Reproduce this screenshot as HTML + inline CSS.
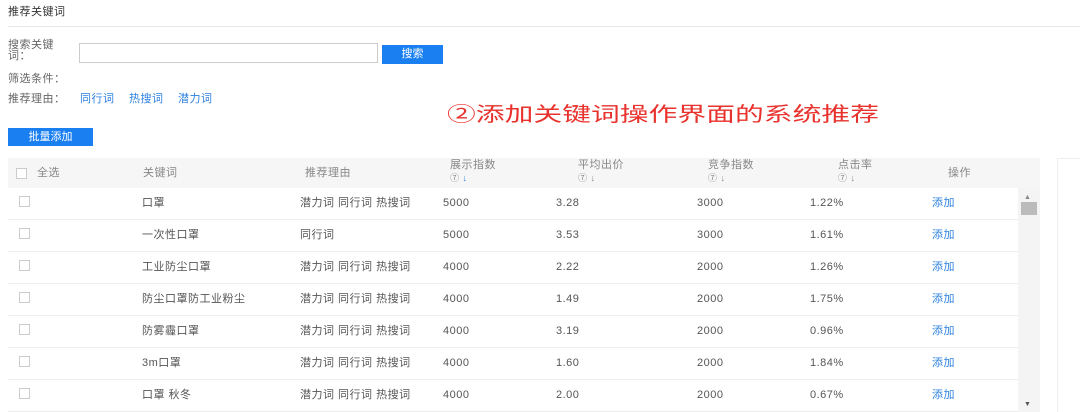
<!DOCTYPE html>
<html><head><meta charset="utf-8"><style>
*{margin:0;padding:0;box-sizing:border-box}
body{width:1080px;height:412px;background:#fff;font-family:"Liberation Sans","Noto Sans CJK SC",sans-serif;font-size:11px;line-height:14px;color:#555;position:relative;overflow:hidden}
.a{position:absolute;white-space:nowrap;line-height:14px;letter-spacing:0.5px}
.blue{color:#2a7fe0}
.btn{position:absolute;background:#1a7ff0;color:#fff;text-align:center}
.cb{position:absolute;width:11px;height:11px;border:1px solid #ccc;background:#fff}
.row{position:absolute;left:8px;width:1010px;height:32px;border-bottom:1px solid #eee}
</style></head><body>
<div class="a" style="left:8px;top:5px;color:#333">推荐关键词</div>
<div class="a" style="left:8px;top:26px;width:1072px;height:1px;background:#e6e6e6"></div>
<div class="a" style="left:8px;top:40px;line-height:11px;color:#666">搜索关键<br>词：</div>
<div class="a" style="left:79px;top:43px;width:299px;height:20px;border:1px solid #ccc"></div>
<div class="btn" style="left:382px;top:45px;width:61px;height:19px;line-height:19px">搜索</div>
<div class="a" style="left:8px;top:72px;color:#666">筛选条件：</div>
<div class="a" style="left:8px;top:92px;color:#666">推荐理由：</div>
<div class="a blue" style="left:80px;top:92px">同行词</div>
<div class="a blue" style="left:129px;top:92px">热搜词</div>
<div class="a blue" style="left:178px;top:92px">潜力词</div>
<div class="a" style="left:447px;top:102px;color:#e8322d;font-size:20px;line-height:26px;letter-spacing:0;transform:scaleX(1.44);transform-origin:0 0">②添加关键词操作界面的系统推荐</div>
<div class="btn" style="left:8px;top:128px;width:85px;height:18px;line-height:18px">批量添加</div>
<div class="a" style="left:8px;top:158px;width:1032px;height:30px;background:#f6f6f6"></div>
<div class="a" style="left:1057px;top:158px;width:23px;height:254px;border-left:1px solid #eee;border-top:1px solid #eee"></div>
<div class="cb" style="left:16px;top:168px"></div>
<div class="a" style="left:37px;top:166px;color:#888">全选</div>
<div class="a" style="left:143px;top:166px;color:#888">关键词</div>
<div class="a" style="left:305px;top:166px;color:#888">推荐理由</div>
<div class="a" style="left:450px;top:159px;color:#888;line-height:13px">展示指数<br><span style="font-size:9px">⑦ <span class="blue">↓</span></span></div>
<div class="a" style="left:578px;top:159px;color:#888;line-height:13px">平均出价<br><span style="font-size:9px">⑦ ↓</span></div>
<div class="a" style="left:708px;top:159px;color:#888;line-height:13px">竞争指数<br><span style="font-size:9px">⑦ ↓</span></div>
<div class="a" style="left:838px;top:159px;color:#888;line-height:13px">点击率<br><span style="font-size:9px">⑦ ↓</span></div>
<div class="a" style="left:948px;top:166px;color:#888">操作</div>
<div class="a" style="left:1018px;top:188px;width:22px;height:224px;background:#f4f4f4"></div>
<div class="a" style="left:1024px;top:191px;font-size:7px;color:#888">▲</div>
<div class="a" style="left:1021px;top:202px;width:16px;height:13px;background:#bbb"></div>
<div class="a" style="left:1024px;top:398px;font-size:7px;color:#555">▼</div>
<div id="rows"></div>
<script>
var d=[["口罩","潜力词 同行词 热搜词","5000","3.28","3000","1.22%"],["一次性口罩","同行词","5000","3.53","3000","1.61%"],["工业防尘口罩","潜力词 同行词 热搜词","4000","2.22","2000","1.26%"],["防尘口罩防工业粉尘","潜力词 同行词 热搜词","4000","1.49","2000","1.75%"],["防雾霾口罩","潜力词 同行词 热搜词","4000","3.19","2000","0.96%"],["3m口罩","潜力词 同行词 热搜词","4000","1.60","2000","1.84%"],["口罩 秋冬","潜力词 同行词 热搜词","4000","2.00","2000","0.67%"]];
var h="";d.forEach(function(r,i){var t=188+i*32;var y=t+8;
h+='<div class="row" style="top:'+t+'px"></div><div class="cb" style="left:19px;top:'+(t+8)+'px"></div>'+
'<div class="a" style="left:142px;top:'+y+'px">'+r[0]+'</div><div class="a" style="left:300px;top:'+y+'px">'+r[1]+'</div>'+
'<div class="a" style="left:443px;top:'+y+'px">'+r[2]+'</div><div class="a" style="left:556px;top:'+y+'px">'+r[3]+'</div>'+
'<div class="a" style="left:697px;top:'+y+'px">'+r[4]+'</div><div class="a" style="left:810px;top:'+y+'px">'+r[5]+'</div>'+
'<div class="a blue" style="left:932px;top:'+y+'px">添加</div>';});
document.getElementById("rows").innerHTML=h;
</script>
</body></html>
